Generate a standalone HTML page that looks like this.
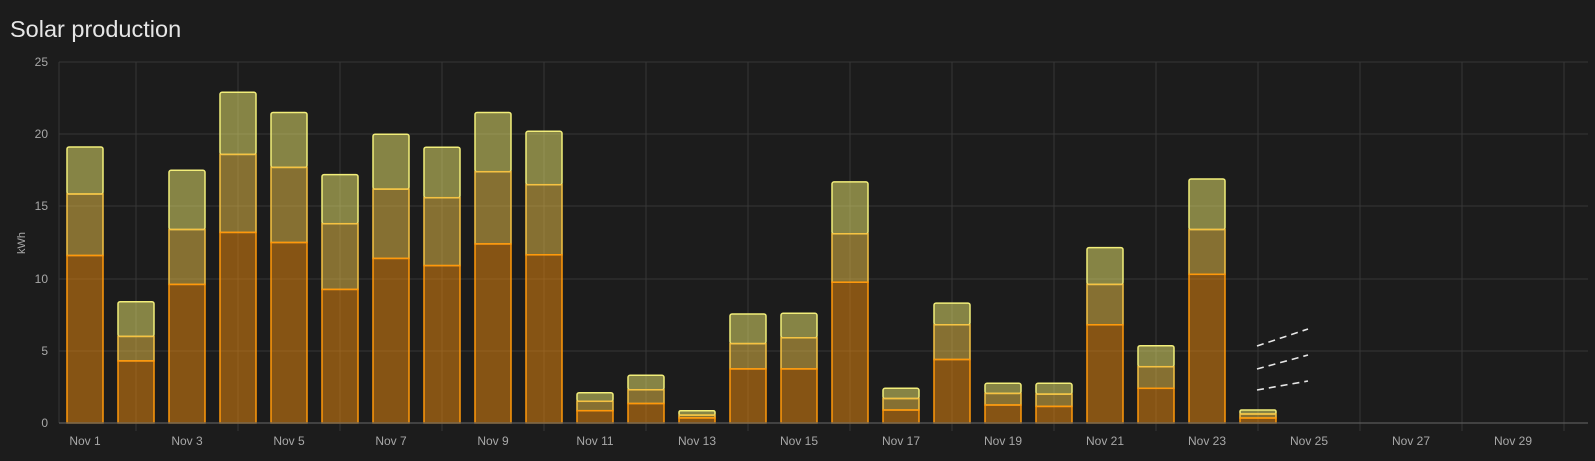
<!DOCTYPE html>
<html><head><meta charset="utf-8"><style>
html,body{margin:0;padding:0;background:#1c1c1c;width:1595px;height:461px;overflow:hidden}
svg{display:block}
text{font-family:"Liberation Sans",sans-serif}
.t{fill:rgba(240,236,110,0.5);stroke:#f2ee7a;stroke-width:1.5}
.m{fill:rgba(240,196,72,0.5);stroke:#f5c242;stroke-width:1.5}
.b{fill:rgba(240,140,12,0.5);stroke:#ff980a;stroke-width:1.5}
.g{stroke:#363636;stroke-width:1}
.yl{fill:#a8a8a8;font-size:12px;text-anchor:end}
.xl{fill:#a8a8a8;font-size:12px;text-anchor:middle}
</style></head><body>
<svg width="1595" height="461" viewBox="0 0 1595 461">
<text x="10" y="37" fill="#e6e6e6" font-size="23.5">Solar production</text>
<g class="g">
<line x1="59" y1="62" x2="1588" y2="62"/><line x1="59" y1="134" x2="1588" y2="134"/>
<line x1="59" y1="206" x2="1588" y2="206"/><line x1="59" y1="279" x2="1588" y2="279"/>
<line x1="59" y1="351" x2="1588" y2="351"/>
<line x1="136" y1="62" x2="136" y2="431"/><line x1="238" y1="62" x2="238" y2="431"/>
<line x1="340" y1="62" x2="340" y2="431"/><line x1="442" y1="62" x2="442" y2="431"/>
<line x1="544" y1="62" x2="544" y2="431"/><line x1="646" y1="62" x2="646" y2="431"/>
<line x1="748" y1="62" x2="748" y2="431"/><line x1="850" y1="62" x2="850" y2="431"/>
<line x1="952" y1="62" x2="952" y2="431"/><line x1="1054" y1="62" x2="1054" y2="431"/>
<line x1="1156" y1="62" x2="1156" y2="431"/><line x1="1258" y1="62" x2="1258" y2="431"/>
<line x1="1360" y1="62" x2="1360" y2="431"/><line x1="1462" y1="62" x2="1462" y2="431"/>
<line x1="1564" y1="62" x2="1564" y2="431"/>
<line x1="59" y1="62" x2="59" y2="423"/>
</g>
<text class="yl" x="48" y="66">25</text><text class="yl" x="48" y="138">20</text>
<text class="yl" x="48" y="210">15</text><text class="yl" x="48" y="283">10</text>
<text class="yl" x="48" y="355">5</text><text class="yl" x="48" y="427">0</text>
<text x="25" y="243" fill="#a8a8a8" font-size="11" text-anchor="middle" transform="rotate(-90 25 243)">kWh</text>
<g>
<rect class="t" x="67" y="147" width="36" height="47" rx="2"/><rect class="m" x="67" y="194" width="36" height="61.5"/><rect class="b" x="67" y="255.5" width="36" height="167.5"/>
<rect class="t" x="118" y="301.7" width="36" height="34.7" rx="2"/><rect class="m" x="118" y="336.4" width="36" height="24.5"/><rect class="b" x="118" y="360.9" width="36" height="62.1"/>
<rect class="t" x="169" y="170.3" width="36" height="59.2" rx="2"/><rect class="m" x="169" y="229.5" width="36" height="54.9"/><rect class="b" x="169" y="284.4" width="36" height="138.6"/>
<rect class="t" x="220" y="92.3" width="36" height="62.1" rx="2"/><rect class="m" x="220" y="154.4" width="36" height="78"/><rect class="b" x="220" y="232.4" width="36" height="190.6"/>
<rect class="t" x="271" y="112.5" width="36" height="54.9" rx="2"/><rect class="m" x="271" y="167.4" width="36" height="75.1"/><rect class="b" x="271" y="242.5" width="36" height="180.5"/>
<rect class="t" x="322" y="174.6" width="36" height="49.1" rx="2"/><rect class="m" x="322" y="223.7" width="36" height="65.7"/><rect class="b" x="322" y="289.4" width="36" height="133.6"/>
<rect class="t" x="373" y="134.2" width="36" height="54.9" rx="2"/><rect class="m" x="373" y="189.1" width="36" height="69.3"/><rect class="b" x="373" y="258.4" width="36" height="164.6"/>
<rect class="t" x="424" y="147.2" width="36" height="50.5" rx="2"/><rect class="m" x="424" y="197.7" width="36" height="67.9"/><rect class="b" x="424" y="265.6" width="36" height="157.4"/>
<rect class="t" x="475" y="112.5" width="36" height="59.2" rx="2"/><rect class="m" x="475" y="171.7" width="36" height="72.2"/><rect class="b" x="475" y="243.9" width="36" height="179.1"/>
<rect class="t" x="526" y="131.3" width="36" height="53.4" rx="2"/><rect class="m" x="526" y="184.7" width="36" height="70.1"/><rect class="b" x="526" y="254.8" width="36" height="168.2"/>
<rect class="t" x="577" y="392.7" width="36" height="8.6" rx="2"/><rect class="m" x="577" y="401.3" width="36" height="9.4"/><rect class="b" x="577" y="410.7" width="36" height="12.3"/>
<rect class="t" x="628" y="375.3" width="36" height="14.5" rx="2"/><rect class="m" x="628" y="389.8" width="36" height="13.7"/><rect class="b" x="628" y="403.5" width="36" height="19.5"/>
<rect class="t" x="679" y="410.7" width="36" height="4.4" rx="1.5"/><rect class="m" x="679" y="415.1" width="36" height="2.8"/><rect class="b" x="679" y="417.9" width="36" height="5.1"/>
<rect class="t" x="730" y="314" width="36" height="29.6" rx="2"/><rect class="m" x="730" y="343.6" width="36" height="25.3"/><rect class="b" x="730" y="368.9" width="36" height="54.1"/>
<rect class="t" x="781" y="313.3" width="36" height="24.5" rx="2"/><rect class="m" x="781" y="337.8" width="36" height="31.1"/><rect class="b" x="781" y="368.9" width="36" height="54.1"/>
<rect class="t" x="832" y="181.9" width="36" height="51.9" rx="2"/><rect class="m" x="832" y="233.8" width="36" height="48.4"/><rect class="b" x="832" y="282.2" width="36" height="140.8"/>
<rect class="t" x="883" y="388.3" width="36" height="10.2" rx="2"/><rect class="m" x="883" y="398.5" width="36" height="11.5"/><rect class="b" x="883" y="410" width="36" height="13"/>
<rect class="t" x="934" y="303.1" width="36" height="21.7" rx="2"/><rect class="m" x="934" y="324.8" width="36" height="34.7"/><rect class="b" x="934" y="359.5" width="36" height="63.5"/>
<rect class="t" x="985" y="383.3" width="36" height="10.1" rx="2"/><rect class="m" x="985" y="393.4" width="36" height="11.6"/><rect class="b" x="985" y="405" width="36" height="18"/>
<rect class="t" x="1036" y="383.3" width="36" height="10.8" rx="2"/><rect class="m" x="1036" y="394.1" width="36" height="12.3"/><rect class="b" x="1036" y="406.4" width="36" height="16.6"/>
<rect class="t" x="1087" y="247.6" width="36" height="36.8" rx="2"/><rect class="m" x="1087" y="284.4" width="36" height="40.4"/><rect class="b" x="1087" y="324.8" width="36" height="98.2"/>
<rect class="t" x="1138" y="345.7" width="36" height="21" rx="2"/><rect class="m" x="1138" y="366.7" width="36" height="21.6"/><rect class="b" x="1138" y="388.3" width="36" height="34.7"/>
<rect class="t" x="1189" y="179" width="36" height="50.5" rx="2"/><rect class="m" x="1189" y="229.5" width="36" height="44.8"/><rect class="b" x="1189" y="274.3" width="36" height="148.7"/>
<rect class="t" x="1240" y="410" width="36" height="4" rx="1.5"/><rect class="m" x="1240" y="414" width="36" height="4"/><rect class="b" x="1240" y="418" width="36" height="5"/>
</g>
<g stroke="#e6e6e6" stroke-width="1.6" stroke-dasharray="7,5" fill="none">
<line x1="1257" y1="346" x2="1308" y2="329"/>
<line x1="1257" y1="369" x2="1308" y2="355"/>
<line x1="1257" y1="390" x2="1308" y2="381"/>
</g>
<line x1="59" y1="423" x2="1588" y2="423" stroke="#5a5a5a" stroke-width="1.2"/>
<text class="xl" x="85" y="445">Nov 1</text><text class="xl" x="187" y="445">Nov 3</text>
<text class="xl" x="289" y="445">Nov 5</text><text class="xl" x="391" y="445">Nov 7</text>
<text class="xl" x="493" y="445">Nov 9</text><text class="xl" x="595" y="445">Nov 11</text>
<text class="xl" x="697" y="445">Nov 13</text><text class="xl" x="799" y="445">Nov 15</text>
<text class="xl" x="901" y="445">Nov 17</text><text class="xl" x="1003" y="445">Nov 19</text>
<text class="xl" x="1105" y="445">Nov 21</text><text class="xl" x="1207" y="445">Nov 23</text>
<text class="xl" x="1309" y="445">Nov 25</text><text class="xl" x="1411" y="445">Nov 27</text>
<text class="xl" x="1513" y="445">Nov 29</text>
</svg>
</body></html>
